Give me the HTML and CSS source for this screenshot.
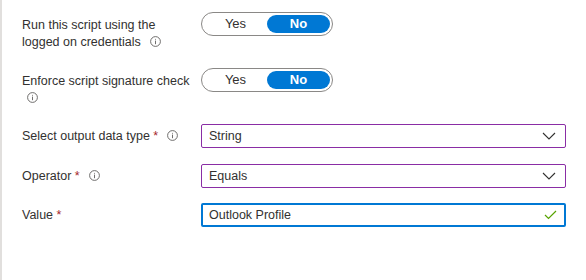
FILE: index.html
```html
<!DOCTYPE html>
<html lang="en">
<head>
    <meta charset="UTF-8">
    <meta name="viewport" content="width=device-width, initial-scale=1.0">
    <title>Detection settings</title>
    <link rel="stylesheet" href="styles.css">
</head>
<body>
    <div class="panel">
        <div class="row row-toggle">
            <div class="label">Run this script using the logged on credentials<svg class="info" width="11" height="11" viewBox="0 0 11 11"><circle cx="5.5" cy="5.5" r="4.9" fill="none" stroke="#605e5c" stroke-width="0.9"/><path d="M5.5 4.6 V8.2 M5.5 2.9 V3.7" stroke="#605e5c" stroke-width="0.9"/></svg></div>
            <div class="toggle">
                <span class="opt">Yes</span>
                <span class="opt selected">No</span>
            </div>
        </div>

        <div class="row row-toggle">
            <div class="label">Enforce script signature check<br><svg class="info first" width="11" height="11" viewBox="0 0 11 11"><circle cx="5.5" cy="5.5" r="4.9" fill="none" stroke="#605e5c" stroke-width="0.9"/><path d="M5.5 4.6 V8.2 M5.5 2.9 V3.7" stroke="#605e5c" stroke-width="0.9"/></svg></div>
            <div class="toggle">
                <span class="opt">Yes</span>
                <span class="opt selected">No</span>
            </div>
        </div>

        <div class="row row-field">
            <div class="label">Select output data type <span class="req">*</span><svg class="info" width="11" height="11" viewBox="0 0 11 11"><circle cx="5.5" cy="5.5" r="4.9" fill="none" stroke="#605e5c" stroke-width="0.9"/><path d="M5.5 4.6 V8.2 M5.5 2.9 V3.7" stroke="#605e5c" stroke-width="0.9"/></svg></div>
            <div class="field dirty">
                <span class="value">String</span>
                <svg class="chevron" width="14" height="8" viewBox="0 0 14 8"><path d="M1 1 L7 7 L13 1" fill="none" stroke="#323130" stroke-width="1.1"/></svg>
            </div>
        </div>

        <div class="row row-field">
            <div class="label">Operator <span class="req">*</span><svg class="info" width="11" height="11" viewBox="0 0 11 11"><circle cx="5.5" cy="5.5" r="4.9" fill="none" stroke="#605e5c" stroke-width="0.9"/><path d="M5.5 4.6 V8.2 M5.5 2.9 V3.7" stroke="#605e5c" stroke-width="0.9"/></svg></div>
            <div class="field dirty">
                <span class="value">Equals</span>
                <svg class="chevron" width="14" height="8" viewBox="0 0 14 8"><path d="M1 1 L7 7 L13 1" fill="none" stroke="#323130" stroke-width="1.1"/></svg>
            </div>
        </div>

        <div class="row row-field">
            <div class="label">Value <span class="req">*</span></div>
            <div class="field focused">
                <span class="value">Outlook Profile</span>
                <svg class="check" width="13" height="10" viewBox="0 0 13 10"><path d="M1 5 L4.5 8.5 L12 1" fill="none" stroke="#57a300" stroke-width="1.2"/></svg>
            </div>
        </div>
    </div>
</body>
</html>
```

FILE: styles.css
```css
html, body {
    margin: 0;
    padding: 0;
    background-color: #fff;
}
body {
    font-family: "Segoe UI", "Liberation Sans", Arial, sans-serif;
    font-size: 12.5px;
    color: #323130;
}
.panel {
    height: 280px;
    box-sizing: border-box;
    border-left: 2px solid #e1dfdd;
    padding: 12px 20px 0 20px;
}
.row {
    display: flex;
    align-items: flex-start;
}
.row-toggle {
    margin-bottom: 17px;
}
.row-field {
    margin-bottom: 16px;
}
.row-field:nth-child(4) {
    margin-bottom: 15px;
}
.label {
    width: 172px;
    margin-right: 7px;
    padding-top: 5px;
    line-height: 17px;
}
.row-field .label {
    padding-top: 4px;
}
.req {
    color: #a4262c;
}
.info {
    margin-left: 9px;
    vertical-align: -1px;
}
.info.first {
    margin-left: 5px;
}
.toggle {
    display: flex;
    box-sizing: border-box;
    width: 132px;
    height: 24px;
    padding: 2px;
    border: 1px solid #8a8886;
    border-radius: 12px;
}
.opt {
    flex: 1;
    text-align: center;
    font-size: 13px;
    line-height: 18px;
    border-radius: 10px;
}
.opt.selected {
    background-color: #0078d4;
    color: #fff;
    font-weight: bold;
}
.field {
    display: flex;
    align-items: center;
    justify-content: space-between;
    box-sizing: border-box;
    width: 365px;
    height: 24px;
    padding: 0 8px 0 7px;
    border: 1px solid #8a2da5;
    border-radius: 2px;
}
.field.focused {
    height: 24px;
    border: 2px solid #0078d4;
    padding: 0 7px 0 6px;
}
.chevron {
    margin-right: 1px;
}
```
